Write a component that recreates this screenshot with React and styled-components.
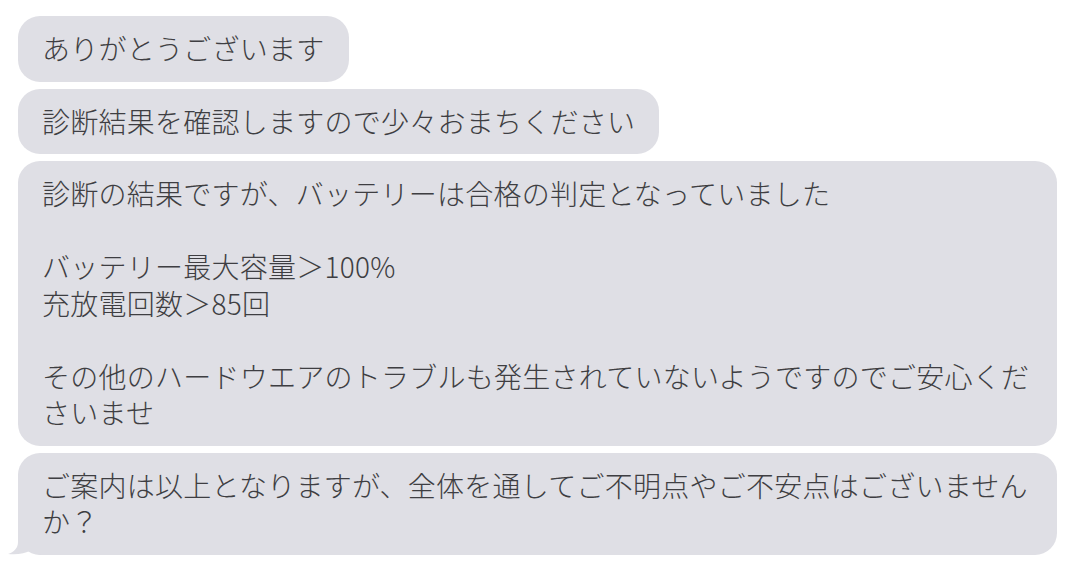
import styled, { createGlobalStyle } from "styled-components";

const GlobalStyle = createGlobalStyle`
    body {
        margin: 0;
        background: #ffffff;
        font-family: "Noto Sans CJK JP", "Noto Sans", sans-serif;
    }
`

const messages = [
    ["ありがとうございます"],
    ["診断結果を確認しますので少々おまちください"],
    [
        "診断の結果ですが、バッテリーは合格の判定となっていました",
        "バッテリー最大容量＞100%\n充放電回数＞85回",
        "その他のハードウエアのトラブルも発生されていないようですのでご安心くださいませ",
    ],
    ["ご案内は以上となりますが、全体を通してご不明点やご不安点はございませんか？"],
]

export default function App() {
    return (
        <>
            <GlobalStyle />
            <Thread>
                {messages.map((paragraphs, i) => (
                    <Bubble key={i}>
                        {paragraphs.map((p, j) => <Paragraph key={j}>{p}</Paragraph>)}
                        {i === messages.length - 1 && (
                            <Tail width="34" height="27" viewBox="0 0 34 27">
                                <path d="M10 0 V13 C10 19 6 23 0 25 C8 26 17 25 23 21 C27 24 31 26 34 26 V0 Z" />
                            </Tail>
                        )}
                    </Bubble>
                ))}
            </Thread>
        </>
    )
}

const Thread = styled.div`
    display: flex;
    flex-direction: column;
    align-items: flex-start;
    gap: 7px;

    padding: 16px 23px 18px 18px;
`

const Bubble = styled.div`
    position: relative;
    box-sizing: border-box;
    max-width: 100%;

    padding: 14px 24px 15px;
    border-radius: 22px;

    background: #dfdfe5;
    color: #3e3e42;

    font-size: 28px;
    font-weight: 300;
    line-height: 36.5px;
    letter-spacing: 0.25px;
`

const Paragraph = styled.p`
    margin: 0;
    white-space: pre-line;

    & + & {
        margin-top: 36.5px;
    }
`

const Tail = styled.svg`
    position: absolute;
    left: -10px;
    bottom: -1px;

    path {
        fill: #dfdfe5;
    }
`
